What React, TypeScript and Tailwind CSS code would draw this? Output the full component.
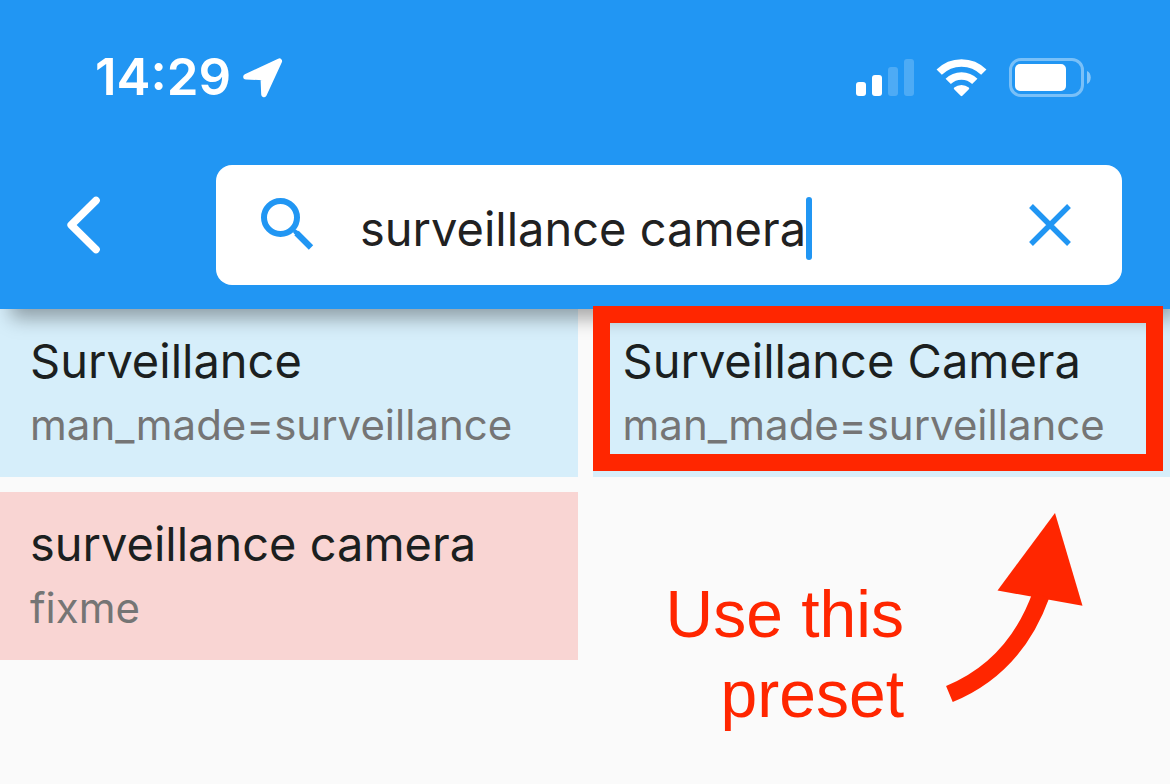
import { useState } from "react";

function LocationIcon() {
  return (
    <svg className="h-10 w-10" viewBox="0 0 40 40" aria-hidden="true">
      <path
        d="M3 18.7 36.3 3.2 21 36.4 20.3 19.5Z"
        fill="#fff"
        stroke="#fff"
        strokeWidth="5.6"
        strokeLinejoin="round"
      />
    </svg>
  );
}

function SignalIcon() {
  return (
    <svg className="h-[38px] w-[58px]" viewBox="0 0 58 38" fill="#fff" aria-hidden="true">
      <rect x="0" y="23" width="10" height="14" rx="3" />
      <rect x="16" y="16" width="10" height="21" rx="3" />
      <rect x="32" y="8" width="10" height="29" rx="3" opacity="0.2" />
      <rect x="48" y="0" width="10" height="37" rx="3" opacity="0.2" />
    </svg>
  );
}

function WifiIcon() {
  return (
    <svg className="h-[38px] w-[51px]" viewBox="0 0 51 38" fill="none" aria-hidden="true">
      <g stroke="#fff" strokeWidth="7.5">
        <path d="M3.2 13.2A31.5 31.5 0 0 1 47.8 13.2" />
        <path d="M12.2 22.4A18.8 18.8 0 0 1 38.8 22.4" />
      </g>
      <path
        d="M19 29.5A10 10 0 0 1 32 29.5L25.5 36Z"
        fill="#fff"
        stroke="#fff"
        strokeWidth="2.4"
        strokeLinejoin="round"
      />
    </svg>
  );
}

function BatteryIcon() {
  return (
    <svg className="h-[39px] w-[82px]" viewBox="0 0 82 39" aria-hidden="true">
      <rect x="1.5" y="1.5" width="72" height="36" rx="10.5" fill="none" stroke="#fff" strokeWidth="3" opacity="0.4" />
      <rect x="6" y="6" width="51" height="27" rx="5" fill="#fff" />
      <path d="M78 13C83 15 83 24 78 26Z" fill="#fff" opacity="0.45" />
    </svg>
  );
}

function BackIcon() {
  return (
    <svg className="h-[60px] w-9" viewBox="0 0 36 60" aria-hidden="true">
      <path
        d="M30 5.5 5.2 30 30 54.5"
        fill="none"
        stroke="#fff"
        strokeWidth="7.6"
        strokeLinecap="round"
        strokeLinejoin="round"
      />
    </svg>
  );
}

function SearchIcon() {
  return (
    <svg className="h-[58px] w-[54px] shrink-0" viewBox="0 0 54 58" fill="none" stroke="#2196f3" aria-hidden="true">
      <circle cx="20.5" cy="21.5" r="16.5" strokeWidth="6" />
      <path d="M36.5 37 51 51.5" strokeWidth="6.2" />
      <path d="M35.5 36 38 38" strokeWidth="4.5" strokeLinecap="round" />
    </svg>
  );
}

function ClearIcon() {
  return (
    <svg className="h-[42px] w-[42px]" viewBox="0 0 42 42" aria-hidden="true">
      <path d="M2 2 40 40M40 2 2 40" stroke="#2196f3" strokeWidth="5.4" />
    </svg>
  );
}

function ArrowDrawing() {
  return (
    <svg className="mt-[21px] h-[190px] w-[137px] shrink-0" viewBox="0 0 137 190" aria-hidden="true">
      <path d="M109 0 51.5 77.5 136.5 92.8Z" fill="#ff2600" />
      <path d="M3.4 181Q69 154 95 82" fill="none" stroke="#ff2600" strokeWidth="17.5" />
    </svg>
  );
}

type PresetProps = {
  title: string;
  tag: string;
  tone: "blue" | "red";
  highlighted?: boolean;
};

function Preset({ title, tag, tone, highlighted }: PresetProps) {
  return (
    <div className="relative">
      <button
        type="button"
        className={`block w-full px-[30px] py-5 text-left ${tone === "blue" ? "bg-[#d6eefa]" : "bg-[#f9d5d3]"}`}
      >
        <span className="block text-[47px] leading-[64px] whitespace-nowrap text-[#1b1f20]">{title}</span>
        <span className="block text-[42px] leading-[64px] whitespace-nowrap text-[#757575]">{tag}</span>
      </button>
      {highlighted && (
        <div className="pointer-events-none absolute -top-[3px] right-[7px] bottom-[6px] left-0 z-20 border-[17px] border-[#ff2600]" />
      )}
    </div>
  );
}

export default function App() {
  const [query, setQuery] = useState("surveillance camera");

  return (
    <div className="min-h-screen overflow-hidden bg-[#fafafa] font-['Inter','Liberation_Sans',sans-serif]">
      <header className="relative z-10 bg-[#2196f3] pt-10 pb-6 shadow-[8px_12px_18px_-3px_rgba(0,0,0,0.34)]">
        <div className="flex h-[75px] items-center justify-between pr-[79px] pl-[95px]">
          <div className="flex items-center gap-3 text-[51px] font-semibold text-white">
            <time>14:29</time>
            <LocationIcon />
          </div>
          <div className="flex items-center gap-[22px]">
            <SignalIcon />
            <WifiIcon />
            <BatteryIcon />
          </div>
        </div>
        <div className="mt-[50px] flex items-center pr-12 pl-[66px]">
          <button type="button" aria-label="Back" className="mr-[114px]">
            <BackIcon />
          </button>
          <div className="flex h-[120px] min-w-0 flex-1 items-center rounded-2xl bg-white pr-[51px] pl-11">
            <SearchIcon />
            <div className="ml-[46px] flex min-w-0 flex-1 items-center">
              <input
                type="text"
                aria-label="Search presets"
                value={query}
                onChange={(e) => setQuery(e.target.value)}
                className="field-sizing-content h-20 min-w-0 bg-transparent pt-1.5 text-[47px] text-[#212121] caret-transparent outline-none"
              />
              <span className="mt-1.5 h-[63px] w-1.5 shrink-0 rounded-full bg-[#2196f3]" />
            </div>
            <button type="button" aria-label="Clear search" onClick={() => setQuery("")}>
              <ClearIcon />
            </button>
          </div>
        </div>
      </header>

      <main className="grid grid-cols-2 gap-[15px]">
        <div className="flex flex-col gap-[15px]">
          <Preset title="Surveillance" tag="man_made=surveillance" tone="blue" />
          <Preset title="surveillance camera" tag="fixme" tone="red" />
        </div>
        <div className="flex flex-col gap-[15px]">
          <Preset title="Surveillance Camera" tag="man_made=surveillance" tone="blue" highlighted />
          <div className="flex items-start justify-end gap-[42px] pr-[87px]">
            <p className="pt-[82px] text-right font-['Liberation_Sans',Arial,sans-serif] text-[66px] leading-[80px] text-[#ff2600]">
              Use this
              <br />
              preset
            </p>
            <ArrowDrawing />
          </div>
        </div>
      </main>
    </div>
  );
}
